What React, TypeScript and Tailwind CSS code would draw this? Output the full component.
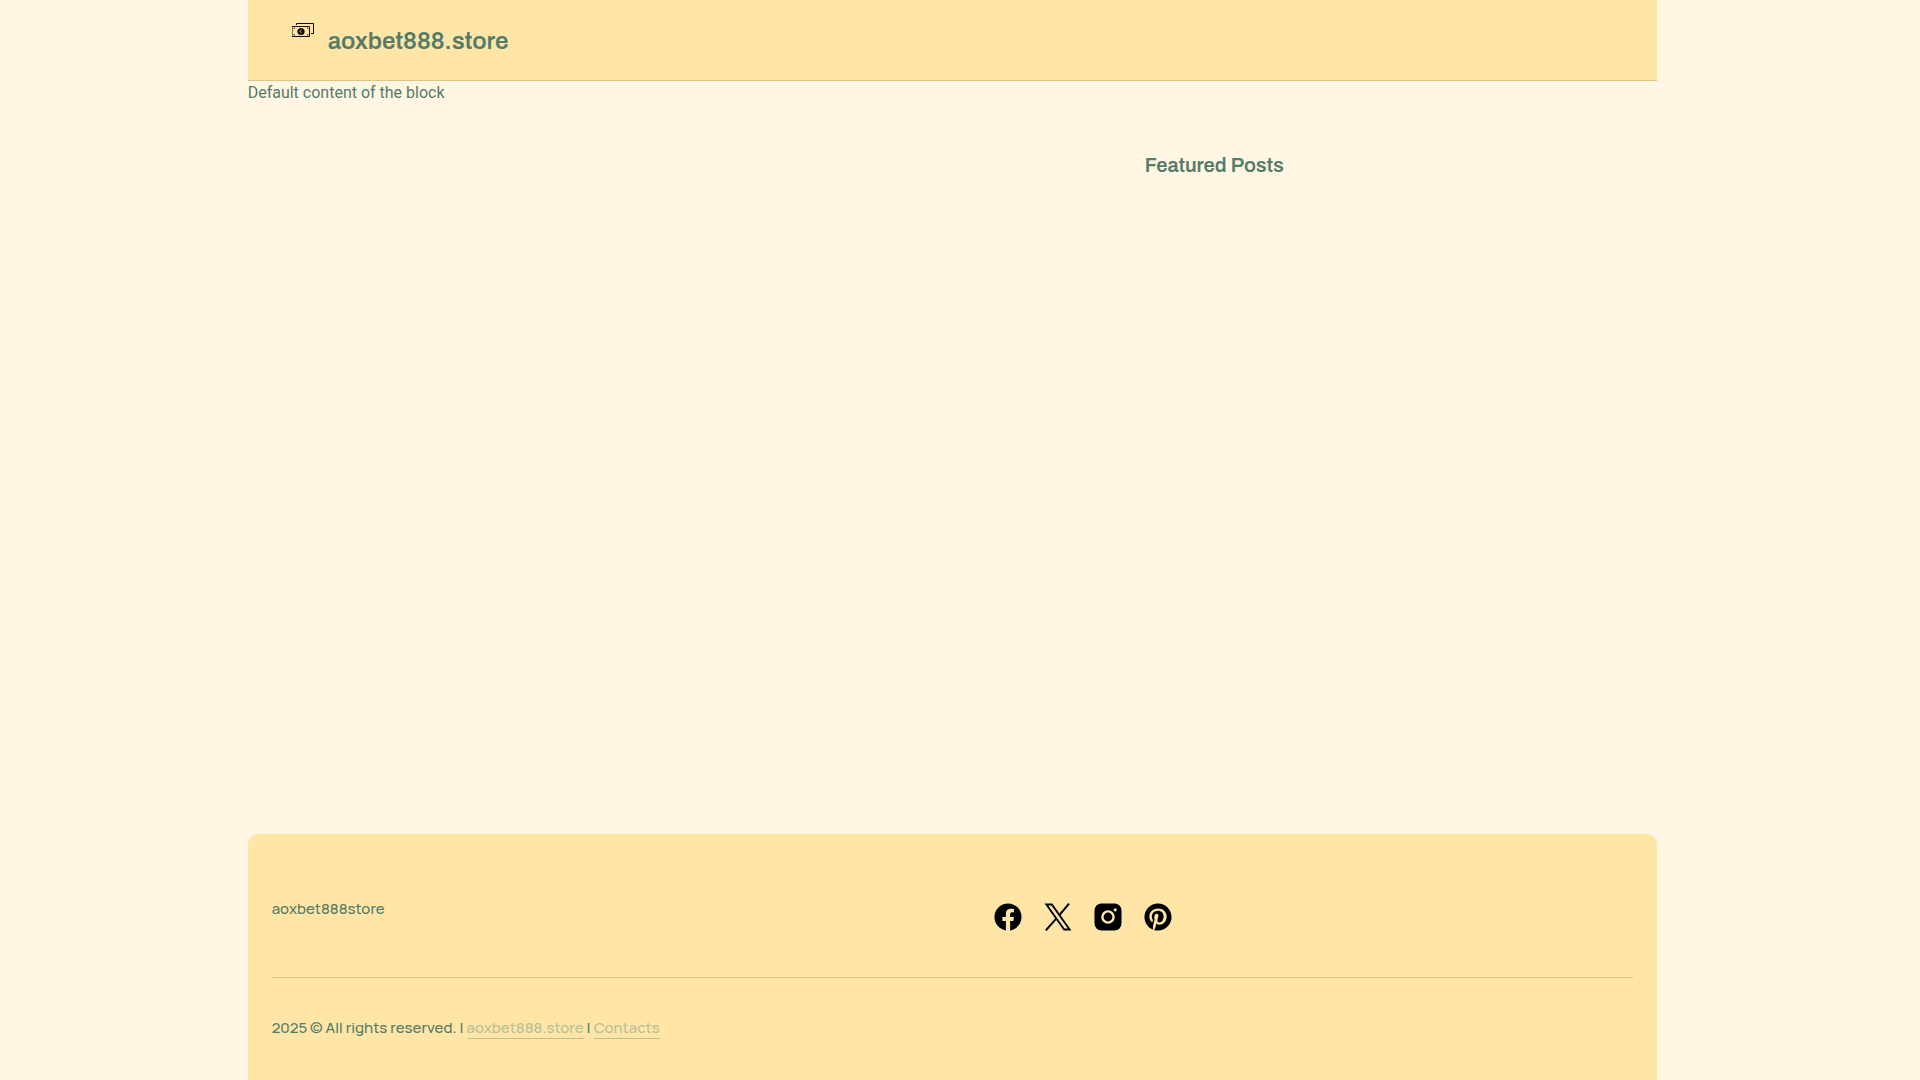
import { FaFacebook, FaPinterest } from 'react-icons/fa'

const DOMAIN = 'aoxbet888.store'

function MoneyIcon() {
  return (
    <svg className="w-6 h-6" viewBox="0 0 24 24" fill="none" stroke="#140800" strokeLinecap="square" aria-hidden="true">
      <path d="M4.5 5.5v-1h17v10h-2" />
      <path d="M.5 7.5h17v10H.5z" />
      <path d="M2 9.5h.5V9M16 9.5h-.5V9M2 15.5h.5v.5M16 15.5h-.5v.5" strokeWidth="0.8" />
      <circle cx="9" cy="12.5" r="3.6" fill="#140800" stroke="none" />
      <path d="M10 11c-2-.6-2.4 3.4 0 3M7.6 12.5h1.6" stroke="#b59b63" strokeWidth="0.8" strokeLinecap="butt" />
    </svg>
  )
}

function XIcon() {
  return (
    <svg className="w-7 h-7" viewBox="0 0 28 28" fill="none" stroke="black" aria-hidden="true">
      <path d="M2.4 1.5h5.4l17.8 25h-5.4z" strokeWidth="1.9" />
      <path d="M25 .6 15.6 11.8M12 15.9 1.8 27.4" strokeWidth="2" />
    </svg>
  )
}

function InstagramIcon() {
  return (
    <svg className="w-7 h-7" viewBox="0 0 28 28" aria-hidden="true">
      <rect x="0.5" y="0.5" width="27" height="27" rx="7" fill="black" />
      <circle cx="14" cy="14" r="5.6" fill="none" stroke="#ffe6a7" strokeWidth="2.4" />
      <circle cx="21.2" cy="6.8" r="1.6" fill="#ffe6a7" />
    </svg>
  )
}

const socials = [
  { name: 'Facebook', href: '#facebook', icon: <FaFacebook className="w-7 h-7" /> },
  { name: 'X', href: '#x', icon: <XIcon /> },
  { name: 'Instagram', href: '#instagram', icon: <InstagramIcon /> },
  { name: 'Pinterest', href: '#pinterest', icon: <FaPinterest className="w-7 h-7" /> }
]

function Header() {
  return (
    <header className="flex items-start gap-3 bg-[#ffe6a7] border-b border-[#dfc385] px-11 pt-[19px] pb-[19px]">
      <MoneyIcon />
      <a href="/" className="pt-0.5 font-['Archivo','Liberation_Sans',sans-serif] text-2xl leading-10 font-[550]">
        {DOMAIN}
      </a>
    </header>
  )
}

function Footer() {
  return (
    <footer className="bg-[#ffe6a7] rounded-t-[10px] px-6 pt-[65px] pb-10 font-['Manrope',Inter,sans-serif] text-[15px] font-medium">
      <div className="grid grid-cols-2 pb-[46px] border-b border-[#dfc385]">
        <p className="leading-5">aoxbet888store</p>
        <nav className="flex gap-[22px] pt-1 pl-[41px] text-black" aria-label="Social">
          {socials.map((item) => (
            <a key={item.name} href={item.href} aria-label={item.name}>
              {item.icon}
            </a>
          ))}
        </nav>
      </div>
      <p className="pt-[38px] leading-6">
        2025 © All rights reserved. |{' '}
        <a href="/" className="inline-block leading-5 text-[#b9bf94] border-b border-[#b9bf94]">{DOMAIN}</a>
        {' | '}
        <a href="/contacts" className="inline-block leading-5 text-[#b9bf94] border-b border-[#b9bf94]">Contacts</a>
      </p>
    </footer>
  )
}

export default function App() {
  return (
    <div className="min-h-screen bg-[#fff6e3] text-[#557c69] pr-[15px]">
      <div className="min-h-screen w-[74%] mx-auto flex flex-col">
        <Header />
        <main className="grow font-[Roboto,sans-serif]">
          <p className="leading-6">Default content of the block</p>
          <div className="grid grid-cols-[7fr_4fr] pt-11">
            <div />
            <aside>
              <h2 className="font-['Archivo','Liberation_Sans',sans-serif] text-xl leading-8 font-semibold">
                Featured Posts
              </h2>
            </aside>
          </div>
        </main>
        <Footer />
      </div>
    </div>
  )
}
